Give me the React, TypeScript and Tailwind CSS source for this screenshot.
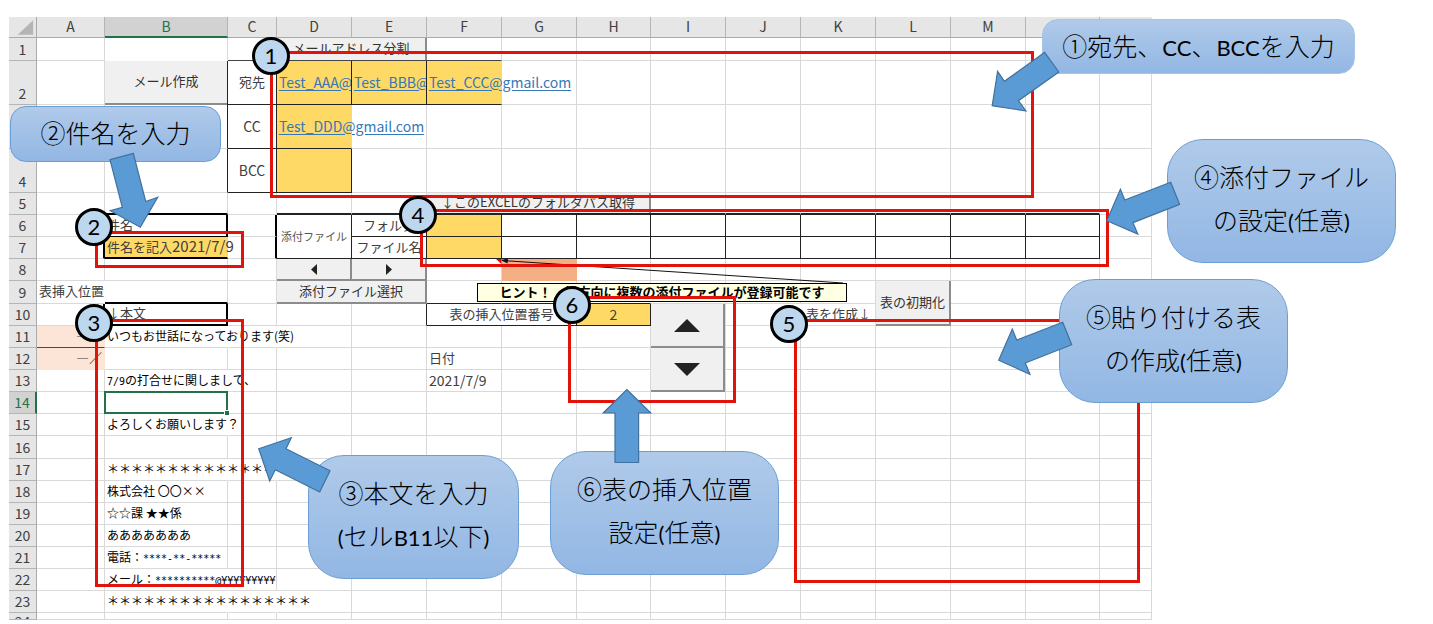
import type { ReactNode } from 'react';
import { twMerge } from 'tailwind-merge';

type Cell = { text?: ReactNode; className?: string; clip?: boolean; colSpan?: number; rowSpan?: number };

const columns = [
  { name: 'A', width: 'w-[68px]' },
  { name: 'B', width: 'w-[123px]' },
  { name: 'C', width: 'w-[49px]' },
  { name: 'D', width: 'w-[75px]' },
  { name: 'E', width: 'w-[75px]' },
  { name: 'F', width: 'w-[75px]' },
  { name: 'G', width: 'w-[75px]' },
  { name: 'H', width: 'w-[74px]' },
  { name: 'I', width: 'w-[75px]' },
  { name: 'J', width: 'w-[75px]' },
  { name: 'K', width: 'w-[75px]' },
  { name: 'L', width: 'w-[75px]' },
  { name: 'M', width: 'w-[75px]' },
  { name: 'N', width: 'w-[74px]' },
  { name: '', width: 'w-[52px]' },
];

const rowHeights: Record<number, string> = {
  1: 'h-[23px]',
  2: 'h-[44px]',
  3: 'h-[44px]',
  4: 'h-[44px]',
  9: 'h-[23px]',
  16: 'h-[23px]',
  24: 'h-[7px]',
};

function FormButton({ className, label, children }: { className: string; label?: string; children: ReactNode }) {
  return (
    <button
      type="button"
      aria-label={label}
      className={twMerge('flex w-full items-center justify-center border-r-2 border-b-2 border-[#8c8c8c] bg-[#f0f0f0] text-[13px] leading-none whitespace-nowrap text-[#333]', className)}
    >
      {children}
    </button>
  );
}

function Triangle({ d, className }: { d: string; className: string }) {
  return <svg viewBox="0 0 26 14" className={className} preserveAspectRatio="none"><path d={d} fill="#222" /></svg>;
}

const link = 'text-[#3478b8] underline underline-offset-2';
const black = 'border-r-[#222] border-b-[#222]';
const yellow = 'bg-[#ffd966]';
const plain = 'text-[12px] text-black';
const half = 'font-["DejaVu_Sans_Mono"] text-[10px] leading-none';
const kanji = 'text-[13px]';
const stars = '＊'.repeat(17);

const cells: Record<string, Cell> = {
  A9: { text: '表挿入位置', className: `${kanji} border-r-transparent` },
  A11: { text: '―／', className: `${kanji} bg-[#fce4d6] border-r-transparent border-b-[#d01010] text-right` },
  A12: { text: '―／', className: `${kanji} bg-[#fce4d6] border-r-transparent border-b-transparent text-right` },
  B1: { className: 'border-b-transparent' },
  C1: { className: 'border-b-[#444]' },
  D1: {
    text: <FormButton className="h-[22px] border-b-0 pb-1">メールアドレス分割</FormButton>,
    className: 'border-r-0 border-b-[#444] p-0',
    colSpan: 2,
  },
  F1: { className: 'border-b-[#444]' },
  B2: { text: <FormButton className="h-[44px] border-r-0 pb-1">メール作成</FormButton>, className: 'border-r-[#222] border-b-0 p-0' },
  B3: { className: 'border-r-[#222]' },
  B4: { className: 'border-r-[#222]' },
  C2: { text: '宛先', className: `${black} ${kanji} text-center` },
  C3: { text: 'CC', className: `${black} text-center` },
  C4: { text: 'BCC', className: `${black} text-center` },
  D2: { text: <a href="mailto:Test_AAA@gmail.com" className={link}>Test_AAA@</a>, className: `${black} ${yellow} pr-0`, clip: true },
  E2: { text: <a href="mailto:Test_BBB@gmail.com" className={link}>Test_BBB@</a>, className: `${black} ${yellow} pr-0`, clip: true },
  F2: { text: <a href="mailto:Test_CCC@gmail.com" className={link}>Test_CCC@gmail.com</a>, className: `${black} ${yellow} border-r-transparent` },
  D3: { text: <a href="mailto:Test_DDD@gmail.com" className={link}>Test_DDD@gmail.com</a>, className: `${black} ${yellow} border-r-transparent` },
  D4: { className: `${black} ${yellow}` },
  B5: { className: 'border-b-2 border-b-black' },
  F5: {
    text: <FormButton className="h-5 border-b-0 pb-1">↓このEXCELのフォルダパス取得</FormButton>,
    className: 'border-r-0 border-b-2 border-b-[#222] p-0',
    colSpan: 3,
  },
  A6: { className: 'border-r-2 border-r-black' },
  A7: { className: 'border-r-2 border-r-black' },
  B6: { text: '件名', className: `${kanji} border-r-2 border-r-black border-b-black` },
  B7: { text: <>件名を記入<span className="text-[15px] leading-none">2021/7/9</span></>, className: `${yellow} ${kanji} border-b-2 border-b-black border-r-transparent` },
  C6: { className: 'border-r-2 border-r-black' },
  C7: { className: 'border-r-2 border-r-black' },
  D6: { text: '添付ファイル', className: `${black} px-0 text-center text-[11px] text-[#555]`, rowSpan: 2 },
  E6: { text: 'フォルダ', className: `${black} ${kanji} text-center` },
  E7: { text: 'ファイル名', className: `${black} ${kanji} px-0 text-center` },
  F6: { className: `${black} ${yellow}` },
  F7: { className: `${black} ${yellow}` },
  D8: {
    text: <FormButton className="h-[22px]" label="前へ"><Triangle d="M26 0v14L0 7z" className="h-[11px] w-[6px]" /></FormButton>,
    className: 'border-0 p-0',
  },
  E8: {
    text: <FormButton className="h-[22px]" label="次へ"><Triangle d="M0 0v14L26 7z" className="h-[11px] w-[6px]" /></FormButton>,
    className: 'border-0 p-0',
  },
  G8: { className: 'bg-[#f4b084] border-transparent' },
  B9: { className: 'border-b-2 border-b-black' },
  D9: { text: <FormButton className="h-[23px] pb-0.5">添付ファイル選択</FormButton>, className: 'border-0 p-0', colSpan: 2 },
  A10: { className: 'border-r-2 border-r-black' },
  B10: { text: '↓本文', className: `${kanji} border-r-2 border-b-2 border-r-black border-b-black` },
  F9: { className: 'border-b-[#222]' },
  G9: { className: 'border-b-[#222]' },
  H9: { className: 'border-b-[#222]' },
  L9: { text: <FormButton className="h-[45px] pb-0.5">表の初期化</FormButton>, className: 'border-0 p-0', rowSpan: 2 },
  E10: { className: 'border-r-[#222]' },
  F10: { text: '表の挿入位置番号', className: `${black} ${kanji} text-center`, colSpan: 2 },
  H10: { text: '2', className: `${black} ${yellow} text-center` },
  I10: {
    text: (
      <>
        <FormButton className="h-[44px]" label="増やす"><Triangle d="M0 14h26L13 0z" className="h-[13px] w-[26px]" /></FormButton>
        <FormButton className="h-[44px]" label="減らす"><Triangle d="M0 0h26L13 14z" className="h-[13px] w-[26px]" /></FormButton>
      </>
    ),
    className: 'border-b-0 p-0',
    rowSpan: 4,
  },
  J10: { className: 'border-r-transparent' },
  K10: { text: '表を作成↓', className: `${kanji} px-1 text-right` },
  B11: { text: 'いつもお世話になっております(笑)', className: `${plain} border-r-transparent` },
  C11: { className: 'border-r-transparent' },
  F12: { text: '日付', className: kanji },
  F13: { text: '2021/7/9' },
  B13: { text: <><span className={half}>7/9</span>の打合せに関しまして、</>, className: `${plain} border-r-transparent` },
  B15: { text: 'よろしくお願いします？', className: `${plain} border-r-transparent` },
  B17: { text: stars, className: `${plain} border-r-transparent` },
  C17: { className: 'border-r-transparent' },
  D17: { className: 'border-r-transparent' },
  B18: { text: '株式会社 〇〇××', className: plain },
  B19: { text: '☆☆課 ★★係', className: plain },
  B20: { text: 'あああああああ', className: plain },
  B21: { text: <>電話：<span className={half}>****-**-*****</span></>, className: plain },
  B22: { text: <>メール：<span className={half}>**********@¥¥¥¥¥¥¥¥¥</span></>, className: `${plain} border-r-transparent` },
  B23: { text: stars, className: `${plain} border-r-transparent` },
  C23: { className: 'border-r-transparent' },
};

for (const name of 'DEIJKLMN') cells[`${name}5`] = { className: 'border-b-2 border-b-[#222]' };
for (const name of 'GHIJKLMN') {
  cells[`${name}6`] = { className: black };
  cells[`${name}7`] = { className: black };
}

const covered = new Set(['E1', 'G5', 'H5', 'D7', 'E9', 'G10', 'L10', 'I11', 'I12', 'I13']);

function SheetCell({ id }: { id: string }) {
  if (covered.has(id)) return null;
  const cell = cells[id] ?? {};
  return (
    <td
      colSpan={cell.colSpan}
      rowSpan={cell.rowSpan}
      className={twMerge('border-r border-b border-[#d9d9d9] px-[2px] pt-0 pb-0.5 align-middle whitespace-nowrap', cell.className, 'leading-4')}
    >
      {cell.clip ? <div className="overflow-hidden leading-5">{cell.text}</div> : cell.text}
    </td>
  );
}

function Sheet() {
  return (
    <table className="w-[1143px] table-fixed border-separate border-spacing-0 text-[14px] text-[#404040]">
      <colgroup>
        <col className="w-[28px]" />
        {columns.map((column, i) => <col key={i} className={column.width} />)}
      </colgroup>
      <thead>
        <tr className="h-[21px]">
          <th className="border-r border-b border-[#ababab] bg-[#e6e6e6] p-0">
            <svg viewBox="0 0 28 20" className="block h-5 w-full"><path d="M25 3v15H9z" fill="#b4b4b4" /></svg>
          </th>
          {columns.map((column, i) => (
            <th
              key={i}
              className={
                column.name === 'B'
                  ? 'border-r border-b-2 border-r-[#b5b5b5] border-b-[#217346] bg-[#d2d2d2] p-0 pb-px leading-4 font-normal text-[#217346]'
                  : 'border-r border-b border-r-[#b5b5b5] border-b-[#ababab] bg-[#e6e6e6] p-0 pb-0.5 leading-4 font-normal last:border-r-0'
              }
            >
              {column.name}
            </th>
          ))}
        </tr>
      </thead>
      <tbody>
        {Array.from({ length: 24 }, (_, i) => i + 1).map((row) => (
          <tr key={row} className={rowHeights[row] ?? 'h-[22px]'}>
            <th
              className={
                row === 14
                  ? 'border-r-2 border-b border-r-[#217346] border-b-[#b5b5b5] bg-[#d2d2d2] p-0 align-bottom leading-4 font-normal text-[#217346]'
                  : 'border-r border-b border-r-[#ababab] border-b-[#b5b5b5] bg-[#e6e6e6] p-0 align-bottom leading-4 font-normal'
              }
            >
              <div className={row === 24 ? 'h-[6px] overflow-hidden' : 'pb-[3px]'}>{row}</div>
            </th>
            {columns.map((column, i) => <SheetCell key={i} id={`${column.name}${row}`} />)}
          </tr>
        ))}
      </tbody>
    </table>
  );
}

function SheetOverlays() {
  return (
    <>
      <div className="absolute top-[391px] left-[104px] h-[23px] w-[124px] border-2 border-[#217346]">
        <span className="absolute -right-[3px] -bottom-[3px] size-[5px] border-t border-l border-white bg-[#217346]" />
      </div>
      <p className="absolute top-[283px] left-[477px] flex h-[19px] w-[370px] items-center justify-center border border-black bg-[#ffffe1] pb-0.5 text-[13px] leading-none font-bold whitespace-nowrap text-black">
        ヒント！　横方向に複数の添付ファイルが登録可能です
      </p>
      <svg className="pointer-events-none absolute inset-0 size-full overflow-visible">
        <path d="M502 260.500L843 283" stroke="#111" fill="none" />
        <path d="M501 260l7-1.500-.5 5z" fill="#111" />
        <path d="M496 259h5.500v5z" fill="#e00" />
      </svg>
    </>
  );
}

const frames = [
  'top-[51px] left-[270px] h-[147px] w-[764px]',
  'top-[231px] left-[95px] h-[37px] w-[149px]',
  'top-[319px] left-[95px] h-[268px] w-[149px]',
  'top-[209px] left-[420px] h-[58px] w-[689px]',
  'top-[319px] left-[794px] h-[264px] w-[346px]',
  'top-[296px] left-[568px] h-[107px] w-[168px]',
];

const badges = [
  'top-[37px] left-[252px]',
  'top-[208px] left-[75px]',
  'top-[304px] left-[75px]',
  'top-[196px] left-[399px]',
  'top-[305px] left-[770px]',
  'top-[286px] left-[553px]',
];

const arrows = [
  '1044.6,52.3 1058.8,72 1018.4,100.7 1025.9,111 992.2,105.7 997.6,71.3 1004.4,81.3',
  '133.3,153.3 110,159.7 122.3,207.3 110.3,210.7 140.3,227.3 157.7,197.3 145.7,201.5',
  '258.7,448.7 291.3,437.7 286,448.7 330,470.7 319.7,492 275.3,469.7 269.7,481',
  '1170.7,182.3 1179.6,204.3 1133,222.7 1137.8,234 1106.8,220.7 1120.4,189.3 1124.8,200',
  '1062.7,322.3 1071.7,344.7 1025.3,363 1030,374.3 998.7,360.3 1012.3,329 1016.7,340',
  '626.8,389.5 650.7,413 638.6,413 638.6,462.5 615,462.5 615,413 603.2,413',
];

function En({ children }: { children: ReactNode }) {
  return <span className='font-["Lato"] text-[22px] font-normal'>{children}</span>;
}

function Callout({ className, children }: { className: string; children: ReactNode }) {
  return (
    <div
      className={twMerge('absolute flex items-center justify-center rounded-[36px] border border-[#6b9fd4] bg-linear-to-b from-[#b0cae9] to-[#92b7e4] pb-1 text-center text-[25px] leading-[43px] font-light whitespace-nowrap text-black', className)}
    >
      <p>{children}</p>
    </div>
  );
}

export default function App() {
  return (
    <main className='relative min-h-[620px] bg-white pt-[17px] pl-[9px] font-["Noto_Sans_CJK_JP",sans-serif]'>
      <Sheet />
      <SheetOverlays />
      {frames.map((place) => <div key={place} className={`pointer-events-none absolute border-3 border-[#e3120b] ${place}`} />)}
      <Callout className="top-[19px] left-[1042px] h-[55px] w-[313px] rounded-2xl border-[#a5c4e8] pb-0">
        ①宛先、<En>CC</En>、<En>BCC</En>を入力
      </Callout>
      <Callout className="top-[106px] left-[10px] h-[56px] w-[211px] rounded-2xl">②件名を入力</Callout>
      <Callout className="top-[455px] left-[308px] h-[124px] w-[211px]">
        ③本文を入力<br /><En>(</En>セル<En>B11</En>以下<En>)</En>
      </Callout>
      <Callout className="top-[139px] left-[1167px] h-[124px] w-[229px]">
        ④添付ファイル<br />の設定<En>(</En>任意<En>)</En>
      </Callout>
      <Callout className="top-[279px] left-[1059px] h-[124px] w-[229px]">
        ⑤貼り付ける表<br />の作成<En>(</En>任意<En>)</En>
      </Callout>
      <Callout className="top-[451px] left-[550px] h-[124px] w-[229px]">
        ⑥表の挿入位置<br />設定<En>(</En>任意<En>)</En>
      </Callout>
      <svg className="pointer-events-none absolute inset-0 size-full overflow-visible">
        {arrows.map((points) => <polygon key={points} points={points} fill="#5b9bd5" stroke="#41719c" strokeWidth="1.200" />)}
      </svg>
      {badges.map((place, i) => (
        <span
          key={place}
          className={`absolute flex size-[38px] items-center justify-center rounded-full border-3 border-black bg-[#bdd7ee] font-["Lato"] text-[22px] leading-none text-black ${place}`}
        >
          {i + 1}
        </span>
      ))}
    </main>
  );
}
